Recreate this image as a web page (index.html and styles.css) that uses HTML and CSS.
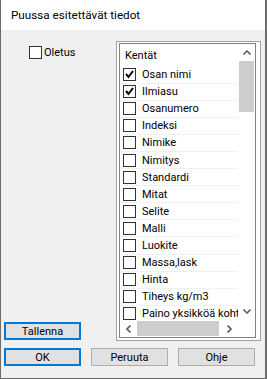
FILE: index.html
```html
<!DOCTYPE html>
<html lang="fi">

<head>
  <meta charset="UTF-8" />
  <title>Puussa esitettävät tiedot</title>
  <link rel="stylesheet" href="styles.css">
</head>

<body>
  <div class="window">
    <div class="title-bar">Puussa esitettävät tiedot</div>

    <div class="content">
      <div class="main">
        <div class="side">
          <label class="check-label"><span class="box"></span>Oletus</label>
          <button class="btn btn-default">Tallenna</button>
        </div>

        <div class="list-frame">
          <div class="list">
            <div class="list-items">
              <div class="list-header">Kentät</div>
              <div class="row"><span class="box checked"><svg width="11" height="11" viewBox="0 0 11 11"><polyline points="2,5 4.5,8 9,2" fill="none" stroke="#000" stroke-width="2" /></svg></span>Osan nimi</div>
              <div class="row"><span class="box checked"><svg width="11" height="11" viewBox="0 0 11 11"><polyline points="2,5 4.5,8 9,2" fill="none" stroke="#000" stroke-width="2" /></svg></span>Ilmiasu</div>
              <div class="row"><span class="box"></span>Osanumero</div>
              <div class="row"><span class="box"></span>Indeksi</div>
              <div class="row"><span class="box"></span>Nimike</div>
              <div class="row"><span class="box"></span>Nimitys</div>
              <div class="row"><span class="box"></span>Standardi</div>
              <div class="row"><span class="box"></span>Mitat</div>
              <div class="row"><span class="box"></span>Selite</div>
              <div class="row"><span class="box"></span>Malli</div>
              <div class="row"><span class="box"></span>Luokite</div>
              <div class="row"><span class="box"></span>Massa,lask</div>
              <div class="row"><span class="box"></span>Hinta</div>
              <div class="row"><span class="box"></span>Tiheys kg/m3</div>
              <div class="row"><span class="box"></span>Paino yksikköä kohti</div>
            </div>

            <div class="vscroll">
              <span class="arrow"><svg width="8" height="5" viewBox="0 0 8 5"><polyline points="0.5,4.5 4,1 7.5,4.5" fill="none" stroke="#606060" stroke-width="1.6" /></svg></span>
              <div class="track"><div class="thumb thumb-v"></div></div>
              <span class="arrow"><svg width="8" height="5" viewBox="0 0 8 5"><polyline points="0.5,0.5 4,4 7.5,0.5" fill="none" stroke="#606060" stroke-width="1.6" /></svg></span>
            </div>

            <div class="hscroll">
              <span class="arrow"><svg width="5" height="8" viewBox="0 0 5 8"><polyline points="4.5,0.5 1,4 4.5,7.5" fill="none" stroke="#606060" stroke-width="1.6" /></svg></span>
              <div class="track"><div class="thumb thumb-h"></div></div>
              <span class="arrow"><svg width="5" height="8" viewBox="0 0 5 8"><polyline points="0.5,0.5 4,4 0.5,7.5" fill="none" stroke="#606060" stroke-width="1.6" /></svg></span>
            </div>

            <div class="corner"></div>
          </div>
        </div>
      </div>

      <div class="actions">
        <button class="btn btn-default">OK</button>
        <button class="btn">Peruuta</button>
        <button class="btn">Ohje</button>
      </div>
    </div>
  </div>
</body>

</html>
```

FILE: styles.css
```css
* {
  margin: 0;
  padding: 0;
  box-sizing: border-box;
}

body {
  font-family: Roboto, 'Liberation Sans', sans-serif;
  font-size: 11px;
  color: #000;
  background: #fff;
}

.window {
  width: 267px;
  height: 379px;
  border: 1px solid #6b6b6b;
  border-top: none;
  border-right-width: 2px;
  background: #f0f0f0;
  display: flex;
  flex-direction: column;
}

.title-bar {
  height: 30px;
  background: #fff;
  padding-left: 10px;
  line-height: 30px;
  font-size: 11.7px;
}

.content {
  flex: 1;
  padding: 11px 4px 0 3px;
  display: flex;
  flex-direction: column;
}

.main {
  display: flex;
  height: 300px;
}

.side {
  width: 112px;
  display: flex;
  flex-direction: column;
  justify-content: space-between;
  padding-top: 5px;
  padding-bottom: 1px;
}

.check-label {
  display: flex;
  align-items: center;
  gap: 2px;
  margin-left: 25px;
  height: 13px;
}

.box {
  width: 13px;
  height: 13px;
  border: 1px solid #333;
  background: #fff;
  display: inline-flex;
  align-items: center;
  justify-content: center;
  flex-shrink: 0;
}

.btn {
  width: 77px;
  height: 18px;
  font-family: inherit;
  font-size: 11px;
  color: #000;
  background: #e1e1e1;
  border: 1px solid #adadad;
}

.btn-default {
  border: 2px solid #0078d7;
}

.list-frame {
  width: 145px;
  border: 1px solid #a0a0a0;
  padding: 1px 4px 2px 2px;
  background: #fff;
}

.list {
  height: 100%;
  border: 1px solid #828282;
  display: grid;
  grid-template-columns: 1fr 17px;
  grid-template-rows: 1fr 17px;
  overflow: hidden;
}

.list-items {
  overflow: hidden;
  white-space: nowrap;
}

.list-header {
  height: 22.5px;
  padding: 2px 0 0 5px;
  line-height: 20.5px;
}

.row {
  height: 17.1px;
  display: flex;
  align-items: center;
  gap: 6px;
  padding-left: 3px;
  border-bottom: 1px solid #f0f0f0;
}

.vscroll {
  display: flex;
  flex-direction: column;
}

.hscroll {
  display: flex;
}

.arrow {
  width: 17px;
  height: 17px;
  display: flex;
  align-items: center;
  justify-content: center;
  flex-shrink: 0;
}

.track {
  flex: 1;
}

.vscroll .track {
  padding: 0 1px;
}

.thumb-v {
  height: 51px;
  background: #cdcdcd;
}

.hscroll .track {
  padding: 1px 0;
}

.thumb-h {
  width: 82px;
  height: 100%;
  background: #cdcdcd;
}

.corner {
  background: #fff;
}

.actions {
  display: flex;
  gap: 10px;
  margin-top: 7px;
}
```
